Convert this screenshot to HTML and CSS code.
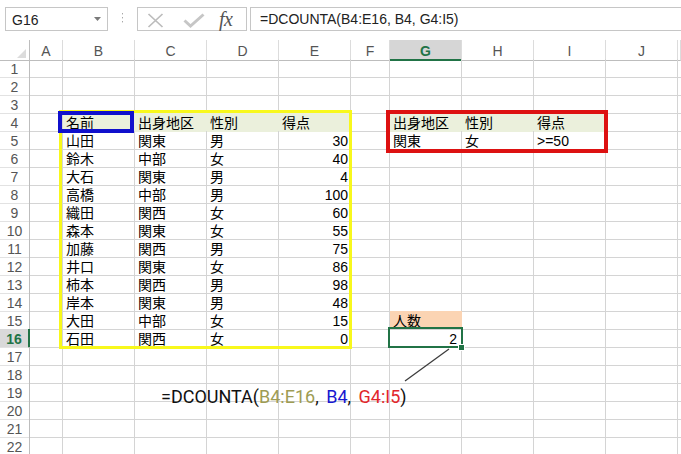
FILE: index.html
```html
<!DOCTYPE html>
<html lang="ja">
<head>
<meta charset="utf-8">
<title>DCOUNTA</title>
<link rel="stylesheet" href="styles.css">
</head>
<body>
<div class="toolbar">
  <div class="namebox"><span>G16</span><svg class="nb-arrow" width="7" height="4" viewBox="0 0 7 4"><polygon points="0,0 7,0 3.5,4" fill="#7a7a7a"/></svg></div>
  <div class="grip"><svg width="3" height="11" viewBox="0 0 3 11"><rect x="1" y="1" width="1" height="1.4" fill="#a8a8a8"/><rect x="1" y="5" width="1" height="1.4" fill="#a8a8a8"/><rect x="1" y="9" width="1" height="1.4" fill="#a8a8a8"/></svg></div>
  <div class="fxbtns">
    <svg class="ic-x" width="17" height="15" viewBox="0 0 17 15"><path d="M1.5 1 L15.5 14 M15.5 1 L1.5 14" stroke="#bcbcbc" stroke-width="1.7" fill="none"/></svg>
    <svg class="ic-check" width="22" height="15" viewBox="0 0 22 15"><path d="M1.5 7.5 L7.5 13 L20.5 1.5" stroke="#c6c6c6" stroke-width="3" fill="none"/></svg>
    <span class="fx">fx</span>
  </div>
  <div class="formula">=DCOUNTA(B4:E16, B4, G4:I5)</div>
</div>

<div class="sheet">
  <div class="row head">
    <div class="corner"><svg width="9" height="9" viewBox="0 0 9 9"><polygon points="9,0 9,9 0,9" fill="#dcdcdc"/></svg></div>
    <div class="ch">A</div><div class="ch">B</div><div class="ch">C</div><div class="ch">D</div><div class="ch">E</div><div class="ch">F</div><div class="ch sel">G</div><div class="ch">H</div><div class="ch">I</div><div class="ch">J</div><div class="ch"></div>
  </div>
  <div class="row"><div class="rh">1</div><div class="c"></div><div class="c"></div><div class="c"></div><div class="c"></div><div class="c"></div><div class="c"></div><div class="c"></div><div class="c"></div><div class="c"></div><div class="c"></div><div class="c"></div></div>
  <div class="row"><div class="rh">2</div><div class="c"></div><div class="c"></div><div class="c"></div><div class="c"></div><div class="c"></div><div class="c"></div><div class="c"></div><div class="c"></div><div class="c"></div><div class="c"></div><div class="c"></div></div>
  <div class="row"><div class="rh">3</div><div class="c"></div><div class="c"></div><div class="c"></div><div class="c"></div><div class="c"></div><div class="c"></div><div class="c"></div><div class="c"></div><div class="c"></div><div class="c"></div><div class="c"></div></div>
  <div class="row"><div class="rh">4</div><div class="c"></div><div class="c hd">名前</div><div class="c hd">出身地区</div><div class="c hd">性別</div><div class="c hd">得点</div><div class="c"></div><div class="c hd">出身地区</div><div class="c hd">性別</div><div class="c hd">得点</div><div class="c"></div><div class="c"></div></div>
  <div class="row"><div class="rh">5</div><div class="c"></div><div class="c">山田</div><div class="c">関東</div><div class="c">男</div><div class="c num">30</div><div class="c"></div><div class="c">関東</div><div class="c">女</div><div class="c">&gt;=50</div><div class="c"></div><div class="c"></div></div>
  <div class="row"><div class="rh">6</div><div class="c"></div><div class="c">鈴木</div><div class="c">中部</div><div class="c">女</div><div class="c num">40</div><div class="c"></div><div class="c"></div><div class="c"></div><div class="c"></div><div class="c"></div><div class="c"></div></div>
  <div class="row"><div class="rh">7</div><div class="c"></div><div class="c">大石</div><div class="c">関東</div><div class="c">男</div><div class="c num">4</div><div class="c"></div><div class="c"></div><div class="c"></div><div class="c"></div><div class="c"></div><div class="c"></div></div>
  <div class="row"><div class="rh">8</div><div class="c"></div><div class="c">高橋</div><div class="c">中部</div><div class="c">男</div><div class="c num">100</div><div class="c"></div><div class="c"></div><div class="c"></div><div class="c"></div><div class="c"></div><div class="c"></div></div>
  <div class="row"><div class="rh">9</div><div class="c"></div><div class="c">織田</div><div class="c">関西</div><div class="c">女</div><div class="c num">60</div><div class="c"></div><div class="c"></div><div class="c"></div><div class="c"></div><div class="c"></div><div class="c"></div></div>
  <div class="row"><div class="rh">10</div><div class="c"></div><div class="c">森本</div><div class="c">関東</div><div class="c">女</div><div class="c num">55</div><div class="c"></div><div class="c"></div><div class="c"></div><div class="c"></div><div class="c"></div><div class="c"></div></div>
  <div class="row"><div class="rh">11</div><div class="c"></div><div class="c">加藤</div><div class="c">関西</div><div class="c">男</div><div class="c num">75</div><div class="c"></div><div class="c"></div><div class="c"></div><div class="c"></div><div class="c"></div><div class="c"></div></div>
  <div class="row"><div class="rh">12</div><div class="c"></div><div class="c">井口</div><div class="c">関東</div><div class="c">女</div><div class="c num">86</div><div class="c"></div><div class="c"></div><div class="c"></div><div class="c"></div><div class="c"></div><div class="c"></div></div>
  <div class="row"><div class="rh">13</div><div class="c"></div><div class="c">柿本</div><div class="c">関西</div><div class="c">男</div><div class="c num">98</div><div class="c"></div><div class="c"></div><div class="c"></div><div class="c"></div><div class="c"></div><div class="c"></div></div>
  <div class="row"><div class="rh">14</div><div class="c"></div><div class="c">岸本</div><div class="c">関東</div><div class="c">男</div><div class="c num">48</div><div class="c"></div><div class="c"></div><div class="c"></div><div class="c"></div><div class="c"></div><div class="c"></div></div>
  <div class="row"><div class="rh">15</div><div class="c"></div><div class="c">大田</div><div class="c">中部</div><div class="c">女</div><div class="c num">15</div><div class="c"></div><div class="c or">人数</div><div class="c"></div><div class="c"></div><div class="c"></div><div class="c"></div></div>
  <div class="row"><div class="rh sel">16</div><div class="c"></div><div class="c">石田</div><div class="c">関西</div><div class="c">女</div><div class="c num">0</div><div class="c"></div><div class="c num active">2</div><div class="c"></div><div class="c"></div><div class="c"></div><div class="c"></div></div>
  <div class="row"><div class="rh">17</div><div class="c"></div><div class="c"></div><div class="c"></div><div class="c"></div><div class="c"></div><div class="c"></div><div class="c"></div><div class="c"></div><div class="c"></div><div class="c"></div><div class="c"></div></div>
  <div class="row"><div class="rh">18</div><div class="c"></div><div class="c"></div><div class="c"></div><div class="c"></div><div class="c"></div><div class="c"></div><div class="c"></div><div class="c"></div><div class="c"></div><div class="c"></div><div class="c"></div></div>
  <div class="row"><div class="rh">19</div><div class="c"></div><div class="c"></div><div class="c"></div><div class="c"></div><div class="c"></div><div class="c"></div><div class="c"></div><div class="c"></div><div class="c"></div><div class="c"></div><div class="c"></div></div>
  <div class="row"><div class="rh">20</div><div class="c"></div><div class="c"></div><div class="c"></div><div class="c"></div><div class="c"></div><div class="c"></div><div class="c"></div><div class="c"></div><div class="c"></div><div class="c"></div><div class="c"></div></div>
  <div class="row"><div class="rh">21</div><div class="c"></div><div class="c"></div><div class="c"></div><div class="c"></div><div class="c"></div><div class="c"></div><div class="c"></div><div class="c"></div><div class="c"></div><div class="c"></div><div class="c"></div></div>
  <div class="row"><div class="rh">22</div><div class="c"></div><div class="c"></div><div class="c"></div><div class="c"></div><div class="c"></div><div class="c"></div><div class="c"></div><div class="c"></div><div class="c"></div><div class="c"></div><div class="c"></div></div>

  <div class="range range-yellow"></div>
  <div class="range range-blue"></div>
  <div class="range range-red"></div>
  <div class="selbox"></div>
  <div class="handle"></div>
  <svg class="leader" width="47" height="35" viewBox="0 0 47 35"><line x1="45" y1="1" x2="1" y2="33" stroke="#3c3c3c" stroke-width="1.2"/></svg>
  <div class="note">=DCOUNTA(<span class="n-olive">B4:E16</span>, <span class="n-blue">B4</span>, <span class="n-red">G4:I5</span>)</div>
</div>
</body>
</html>
```
FILE: styles.css
```css
* { box-sizing: border-box; }

html, body {
  margin: 0;
  padding: 0;
  background: #ffffff;
}

body {
  width: 681px;
  height: 454px;
  overflow: hidden;
  font-family: "Liberation Sans", "Noto Sans CJK JP", sans-serif;
  color: #000;
}

/* ---------- formula bar ---------- */
.toolbar {
  height: 40px;
  display: flex;
  align-items: flex-start;
  padding: 7px 0 0 5px;
}

.namebox {
  width: 103px;
  height: 24px;
  border: 1px solid #c6c6c6;
  display: flex;
  align-items: center;
  justify-content: space-between;
  padding: 1px 6px 0 6px;
  font-size: 14px;
  color: #222;
}

.nb-arrow { margin-top: -2px; }

.grip {
  width: 29px;
  height: 24px;
  display: flex;
  justify-content: center;
  padding-top: 5px;
}

.fxbtns {
  width: 110px;
  height: 24px;
  border: 1px solid #c6c6c6;
  display: flex;
  align-items: center;
  padding-left: 9px;
}

.ic-x { margin-top: 2px; }
.ic-check { margin-left: 19px; margin-top: 3px; }

.fx {
  margin-left: 14px;
  font-family: "Liberation Serif", "DejaVu Serif", serif;
  font-style: italic;
  font-size: 20px;
  color: #555;
  letter-spacing: -0.5px;
  margin-top: 1px;
}

.formula {
  flex: 1;
  height: 24px;
  margin-left: 3px;
  border: 1px solid #c6c6c6;
  border-right: none;
  padding-left: 9px;
  font-size: 14px;
  line-height: 22px;
  color: #222;
  white-space: nowrap;
}

/* ---------- sheet grid ---------- */
.sheet {
  position: relative;
}

.row {
  display: grid;
  grid-template-columns: 30px 33px 72px 72px 72px 72px 39px 72px 72px 72px 72px 3px;
  height: 18px;
}

.row.head { height: 19px; }

.corner {
  border-right: 1px solid #bdbdbd;
  border-bottom: 1px solid #bdbdbd;
  display: flex;
  justify-content: flex-end;
  align-items: flex-end;
  padding: 0 3px 2px 0;
}

.ch {
  border-right: 1px solid #dcdcdc;
  border-bottom: 1px solid #bdbdbd;
  text-align: center;
  font-size: 14px;
  line-height: 16px;
  padding-top: 3px;
  color: #555;
}

.ch.sel {
  background: #d6d6d6;
  color: #217346;
  font-weight: bold;
  border-bottom: 2px solid #217346;
}

.rh {
  border-right: 1px solid #bdbdbd;
  border-bottom: 1px solid #e2e2e2;
  text-align: center;
  font-size: 14px;
  line-height: 16px;
  padding-top: 2px;
  color: #555;
}

.rh.sel {
  background: #d9d9d9;
  color: #217346;
  font-weight: bold;
  border-right: 2px solid #217346;
}

.c {
  border-right: 1px solid #d4d4d4;
  border-bottom: 1px solid #d4d4d4;
  font-size: 14px;
  line-height: 16px;
  padding: 2px 2px 0 3px;
  white-space: nowrap;
  overflow: visible;
}

.num { text-align: right; }

.hd {
  background: #ebf0dc;
  border-right-color: #ebf0dc;
  border-bottom-color: #ebf0dc;
}

.or {
  background: #fbd4b3;
  border-right-color: #fbd4b3;
}

.active { padding-right: 4px; }

/* ---------- overlays ---------- */
.range {
  position: absolute;
  pointer-events: none;
}

.range-yellow {
  left: 59px;
  top: 70px;
  width: 293px;
  height: 239px;
  border: 3px solid #f8f81c;
}

.range-blue {
  left: 58px;
  top: 71px;
  width: 76px;
  height: 22px;
  border: 4px solid #1010cc;
}

.range-red {
  left: 386px;
  top: 70px;
  width: 222px;
  height: 43px;
  border: 4px solid #dd1111;
}

.selbox {
  position: absolute;
  left: 388px;
  top: 287px;
  width: 75px;
  height: 21px;
  border: 2px solid #217346;
}

.handle {
  position: absolute;
  left: 458px;
  top: 304px;
  width: 7px;
  height: 7px;
  background: #217346;
  border: 1px solid #ffffff;
}

.leader {
  position: absolute;
  left: 404px;
  top: 308px;
}

.note {
  position: absolute;
  left: 161px;
  top: 347px;
  font-family: Roboto, "Liberation Sans", sans-serif;
  font-size: 18px;
  line-height: 20px;
  word-spacing: 3px;
  color: #111;
  white-space: nowrap;
}

.n-olive { color: #9e9c54; }
.n-blue { color: #1818d0; }
.n-red { color: #e2262b; }
```
